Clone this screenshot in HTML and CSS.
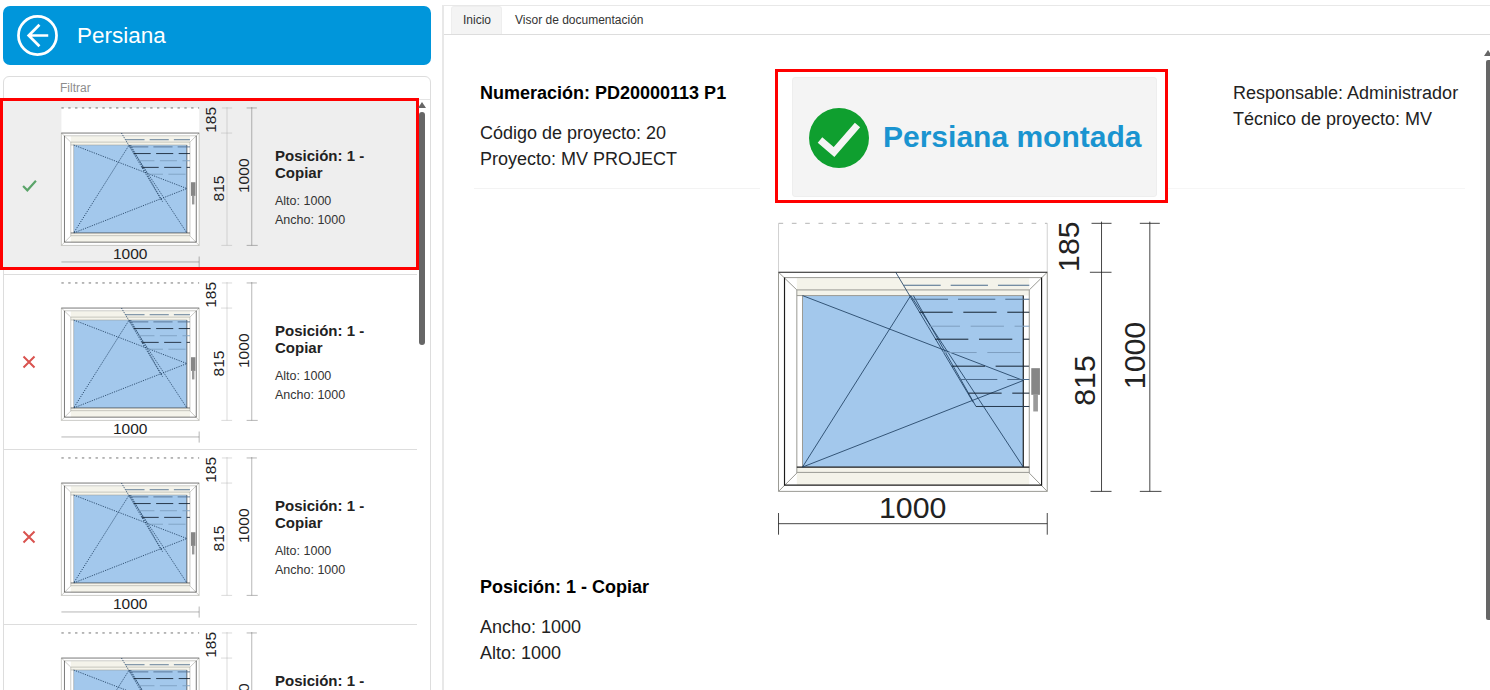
FILE: index.html
```html
<!DOCTYPE html>
<html lang="es">
<head>
<meta charset="utf-8">
<title>Persiana</title>
<link rel="stylesheet" href="styles.css">
</head>
<body>
<svg class="defs" width="0" height="0" aria-hidden="true">
  <defs>
    <symbol id="window" viewBox="0 0 1230 1000">
      <rect class="w-paper" x="55" y="40" width="807" height="805"/>
      <path class="w-dash-top" d="M55 40H862"/>
      <path class="w-light" d="M55 40V187M862 40V187"/>
      <path class="w-cream" d="M110 205H808V257H790V772H808V826H110V772H127V257H110Z"/>
      <rect class="w-glass" x="127" y="257" width="663" height="515"/>
      <path class="w-grey" d="M55 187V845H862V187M73 203H845M110 240H808M110 257H790M127 257V772M110 240V790M808 240V790M110 788H808M55 187L110 240M862 187L808 240M55 845L110 790M862 845L808 790"/>
      <path class="w-dark" d="M55 187H862M73 203V826H845V203M790 257V772M110 772H808"/>
      <path class="w-diag" d="M127 257L790 512L127 772L452 257L790 772M407 187L640 578M460 257L648 590"/>
      <path class="w-slat" d="M478 307H808M525 388H808"/>
      <path class="w-slat w-lower" d="M575 469H808M625 550H808"/>
      <path class="w-slat-mid" d="M430 226H808M452 268H808"/>
      <path class="w-slat-mid w-lower" d="M600 509H808"/>
      <path class="w-slat-soft" d="M500 349H808M550 428H808"/>
      <path class="w-slat-solid w-lower" d="M648 590H808"/>
      <rect class="w-handle" x="814" y="475" width="26" height="80"/>
      <rect class="w-handle-end" x="820" y="555" width="14" height="50"/>
      <path class="w-dim-a" d="M1025 35V845M995 40H1055M990 187H1055M992 845H1055"/>
      <path class="w-dim" d="M1170 35V845M1140 40H1200M1140 845H1205"/>
      <path class="w-dim-b" d="M55 942H862M862 910V975"/>
      <path class="w-dim-b w-lower" d="M55 910V975"/>
    </symbol>
    <symbol id="ok" viewBox="0 0 14 12"><path class="i-ok" d="M1 6.500L5 10.500L13 1.500"/></symbol>
    <symbol id="ko" viewBox="0 0 14 14"><path class="i-ko" d="M1.500 1.500L12.500 12.500M12.500 1.500L1.500 12.500"/></symbol>
  </defs>
</svg>

<aside class="side">
  <header class="side-head">
    <svg class="back" viewBox="0 0 42 42" aria-hidden="true">
      <circle cx="21" cy="21" r="19.500"/>
      <path d="M23 10L12 21L23 32M12 21H32"/>
    </svg>
    <h1 class="side-title">Persiana</h1>
  </header>
  <section class="panel">
    <div class="filter">Filtrar</div>
    <div class="row row-selected">
      <div class="row-state"><svg class="state-ok"><use href="#ok"/></svg></div>
      <svg class="drawing thumb" viewBox="0 0 1230 1000"><use href="#window" width="1230" height="1000"/><text class="d-t" x="458" y="925" text-anchor="middle">1000</text><text class="d-t" text-anchor="middle" transform="translate(958 110) rotate(-90)">185</text><text class="d-t" text-anchor="middle" transform="translate(1005 512) rotate(-90)">815</text><text class="d-t" text-anchor="middle" transform="translate(1155 437) rotate(-90)">1000</text></svg>
      <div class="row-text">
        <div class="row-title">Posición: 1 - Copiar</div>
        <div class="row-meta">Alto: 1000</div>
        <div class="row-meta">Ancho: 1000</div>
      </div>
    </div>
    <div class="row">
      <div class="row-state"><svg class="state-ko"><use href="#ko"/></svg></div>
      <svg class="drawing thumb" viewBox="0 0 1230 1000"><use href="#window" width="1230" height="1000"/><text class="d-t" x="458" y="925" text-anchor="middle">1000</text><text class="d-t" text-anchor="middle" transform="translate(958 110) rotate(-90)">185</text><text class="d-t" text-anchor="middle" transform="translate(1005 512) rotate(-90)">815</text><text class="d-t" text-anchor="middle" transform="translate(1155 437) rotate(-90)">1000</text></svg>
      <div class="row-text">
        <div class="row-title">Posición: 1 - Copiar</div>
        <div class="row-meta">Alto: 1000</div>
        <div class="row-meta">Ancho: 1000</div>
      </div>
    </div>
    <div class="row">
      <div class="row-state"><svg class="state-ko"><use href="#ko"/></svg></div>
      <svg class="drawing thumb" viewBox="0 0 1230 1000"><use href="#window" width="1230" height="1000"/><text class="d-t" x="458" y="925" text-anchor="middle">1000</text><text class="d-t" text-anchor="middle" transform="translate(958 110) rotate(-90)">185</text><text class="d-t" text-anchor="middle" transform="translate(1005 512) rotate(-90)">815</text><text class="d-t" text-anchor="middle" transform="translate(1155 437) rotate(-90)">1000</text></svg>
      <div class="row-text">
        <div class="row-title">Posición: 1 - Copiar</div>
        <div class="row-meta">Alto: 1000</div>
        <div class="row-meta">Ancho: 1000</div>
      </div>
    </div>
    <div class="row">
      <div class="row-state"><svg class="state-ko"><use href="#ko"/></svg></div>
      <svg class="drawing thumb" viewBox="0 0 1230 1000"><use href="#window" width="1230" height="1000"/><text class="d-t" x="458" y="925" text-anchor="middle">1000</text><text class="d-t" text-anchor="middle" transform="translate(958 110) rotate(-90)">185</text><text class="d-t" text-anchor="middle" transform="translate(1005 512) rotate(-90)">815</text><text class="d-t" text-anchor="middle" transform="translate(1155 437) rotate(-90)">1000</text></svg>
      <div class="row-text">
        <div class="row-title">Posición: 1 - Copiar</div>
        <div class="row-meta">Alto: 1000</div>
        <div class="row-meta">Ancho: 1000</div>
      </div>
    </div>
    <div class="scroll scroll-list"><span class="scroll-arrow"></span><span class="scroll-thumb"></span></div>
  </section>
</aside>

<main class="main">
  <nav class="tabs">
    <span class="tab tab-active">Inicio</span>
    <span class="tab">Visor de documentación</span>
  </nav>
  <div class="content">
    <div class="summary">
      <div class="info-left">
        <div class="num">Numeración: PD20000113 P1</div>
        <div class="line">Código de proyecto: 20</div>
        <div class="line">Proyecto: MV PROJECT</div>
      </div>
      <div class="status-frame">
        <div class="status">
          <svg class="status-icon" viewBox="0 0 60 60" aria-hidden="true">
            <circle cx="30" cy="30" r="30"/>
            <path d="M11 32L25 44L48.500 17"/>
          </svg>
          <span class="status-text">Persiana montada</span>
        </div>
      </div>
      <div class="info-right">
        <div class="line">Responsable: Administrador</div>
        <div class="line">Técnico de proyecto: MV</div>
      </div>
    </div>
    <svg class="drawing large" viewBox="0 0 1230 1000"><use href="#window" width="1230" height="1000"/><text class="d-t" x="458" y="925" text-anchor="middle">1000</text><text class="d-t" text-anchor="middle" transform="translate(958 110) rotate(-90)">185</text><text class="d-t" text-anchor="middle" transform="translate(1005 512) rotate(-90)">815</text><text class="d-t" text-anchor="middle" transform="translate(1155 437) rotate(-90)">1000</text></svg>
    <div class="position">
      <div class="pos-title">Posición: 1 - Copiar</div>
      <div class="line">Ancho: 1000</div>
      <div class="line">Alto: 1000</div>
    </div>
  </div>
  <div class="scroll scroll-main"><span class="scroll-arrow"></span><span class="scroll-thumb"></span></div>
</main>
</body>
</html>
```

FILE: styles.css
```css
html, body { margin: 0; height: 690px; overflow: hidden; }
body {
  display: flex;
  background: #fff;
  color: #111;
  font-family: "Liberation Sans", Arial, sans-serif;
}
.defs { position: absolute; }

/* left column */
.side { width: 428px; margin: 6px 0 0 3px; flex: none; }
.side-head {
  height: 59px;
  box-sizing: border-box;
  display: flex;
  align-items: center;
  gap: 19px;
  padding-left: 14px;
  background: #0096db;
  border-radius: 7px;
  color: #fff;
}
.back { width: 41px; height: 41px; flex: none; fill: none; stroke: #fff; stroke-width: 2.800; }
.side-title { margin: 0; font-size: 22.500px; font-weight: 400; }
.panel {
  position: relative;
  margin-top: 11px;
  border: 1px solid #ddd;
  border-radius: 6px 6px 0 0;
  box-sizing: border-box;
}
.filter {
  height: 23px;
  box-sizing: border-box;
  padding: 4px 0 0 56px;
  font-size: 12px;
  line-height: 14px;
  color: #8d8d8d;
  border-bottom: 1px solid #e4e4e4;
}
.row {
  position: relative;
  isolation: isolate;
  width: 413px;
  height: 175px;
  box-sizing: border-box;
  display: flex;
  border-bottom: 1px solid #ddd;
}
.row-selected::after {
  content: "";
  position: absolute;
  z-index: -1;
  top: -2px;
  left: -4px;
  right: -2px;
  bottom: 4px;
  background: #eee;
  border: 3px solid #f00;
  box-sizing: border-box;
}
.row-state {
  width: 50px;
  margin-right: -2px;
  flex: none;
  display: flex;
  justify-content: center;
  align-items: center;
}
.state-ok { width: 15px; height: 13px; margin-bottom: 4px; }
.state-ko { width: 14px; height: 14px; }
.i-ok { fill: none; stroke: #5aa469; stroke-width: 2; }
.i-ko { fill: none; stroke: #d9534f; stroke-width: 2; }
.row-text { width: 125px; margin-left: 13px; padding-top: 47px; }
.row-title { font-size: 15px; font-weight: 700; line-height: 17px; margin-bottom: 11px; color: #222; }
.row-meta { font-size: 12.500px; line-height: 19px; color: #333; }

/* window drawing */
.drawing { display: block; flex: none; overflow: hidden; }
.thumb {
  width: 210px;
  height: 171px;
  margin-top: 1px;
  --diag-dash: 7 7;
  --diag-w: 5;
  --slat-w: 5;
  --top-col: #333;
  --top-w: 4;
  --edge: transparent;
  --dim-col: #555;
  --dim-a: #aaa;
  --lower: hidden;
}
.large {
  width: 410px;
  height: 333px;
  margin: 7px 0 0 316px;
  --diag-dash: none;
  --diag-w: 2.500;
  --slat-w: 3;
  --top-col: #b5b5b5;
  --top-w: 3;
  --edge: #c8c8c8;
  --dim-col: #222;
  --dim-a: #222;
  --lower: visible;
}
.d-t { font-family: "Liberation Sans", Arial, sans-serif; font-size: 91px; fill: #222; }
.w-paper { fill: #fff; }
.w-dash-top { fill: none; stroke: var(--top-col); stroke-width: var(--top-w); stroke-dasharray: 14 26; }
.w-light { fill: none; stroke: var(--edge); stroke-width: 2.500; }
.w-cream { fill: #f4f3ea; }
.w-glass { fill: #a3c8ec; }
.w-grey { fill: none; stroke: #9a9a94; stroke-width: 3; }
.w-dark { fill: none; stroke: #1c1c1c; stroke-width: 3.500; }
.w-diag { fill: none; stroke: #1d3d5f; stroke-width: var(--diag-w); stroke-dasharray: var(--diag-dash); }
.w-slat { fill: none; stroke: #13202f; stroke-width: var(--slat-w); stroke-dasharray: 100 32; }
.w-slat-mid { fill: none; stroke: #4b6b8c; stroke-width: var(--slat-w); stroke-dasharray: 112 30; }
.w-slat-soft { fill: none; stroke: #7d9fc0; stroke-width: var(--slat-w); stroke-dasharray: 100 32; }
.w-slat-solid { fill: none; stroke: #24374c; stroke-width: var(--slat-w); }
.w-lower { visibility: var(--lower); }
.w-handle { fill: #868686; }
.w-handle-end { fill: #9a9a9a; }
.w-dim { fill: none; stroke: var(--dim-col); stroke-width: 2.500; }
.w-dim-a { fill: none; stroke: var(--dim-a); stroke-width: 2.500; }
.w-dim-b { fill: none; stroke: var(--dim-col); stroke-width: 2.500; }

/* main column */
.main {
  position: relative;
  flex: 1;
  margin: 5px 0 0 11px;
  border-top: 1px solid #e8e8e8;
  border-left: 2px solid #e8e8e8;
  min-width: 0;
}
.tabs {
  height: 29px;
  box-sizing: border-box;
  display: flex;
  padding-left: 7px;
  border-bottom: 1px solid #ddd;
  font-size: 12px;
  color: #333;
}
.tab { padding: 7px 0 0; height: 28px; box-sizing: border-box; line-height: 14px; }
.tab-active {
  width: 51px;
  padding: 6px 0 0 11px;
  background: #f4f4f4;
  border-radius: 3px 3px 0 0;
  border: 1px solid #eee;
  border-bottom: 0;
  margin-right: 13px;
}
.content { padding-top: 34px; }
.summary { display: flex; align-items: flex-start; }
.info-left {
  width: 280px;
  height: 105px;
  margin-left: 30px;
  padding: 14px 0 0 6px;
  border-bottom: 1px solid #f3f3f3;
}
.num { font-size: 18px; font-weight: 700; line-height: 20px; margin-bottom: 17px; color: #000; white-space: nowrap; }
.line { font-size: 18px; line-height: 26px; color: #222; white-space: nowrap; }
.status-frame {
  width: 393px;
  height: 134px;
  box-sizing: border-box;
  border: 3px solid #f00;
  padding: 5px 8px 3px 14px;
  margin-left: 15px;
  flex: none;
}
.status {
  height: 120px;
  box-sizing: border-box;
  display: flex;
  align-items: center;
  gap: 14px;
  padding-left: 16px;
  background: #f4f4f4;
  border: 1px solid #eee;
  border-radius: 3px;
}
.status-icon { width: 60px; height: 60px; flex: none; margin-top: 2px; }
.status-icon circle { fill: #0f9f2f; }
.status-icon path { fill: none; stroke: #f4f4f4; stroke-width: 7; }
.status-text { font-size: 30px; font-weight: 700; color: #1a94d0; white-space: nowrap; }
.info-right {
  width: 232px;
  height: 108px;
  padding: 11px 0 0 65px;
  border-bottom: 1px solid #f6f6f6;
  flex: none;
}
.position { margin: 34px 0 0 36px; }
.pos-title { font-size: 18px; font-weight: 700; line-height: 20px; margin-bottom: 17px; color: #000; }

/* scrollbars */
.scroll { position: absolute; display: flex; flex-direction: column; align-items: center; }
.scroll-list { left: 414px; top: 25px; width: 8px; }
.scroll-main { right: 0; top: 44px; width: 4px; }
.scroll-arrow { width: 0; height: 0; border-left: 4px solid transparent; border-right: 4px solid transparent; border-bottom: 6px solid #666; }
.scroll-thumb { display: block; width: 6px; background: #666; border-radius: 3px; }
.scroll-list .scroll-thumb { height: 233px; margin-top: 4px; }
.scroll-main .scroll-thumb { width: 4px; height: 560px; margin-top: 4px; border-radius: 2px 0 0 2px; }
```
